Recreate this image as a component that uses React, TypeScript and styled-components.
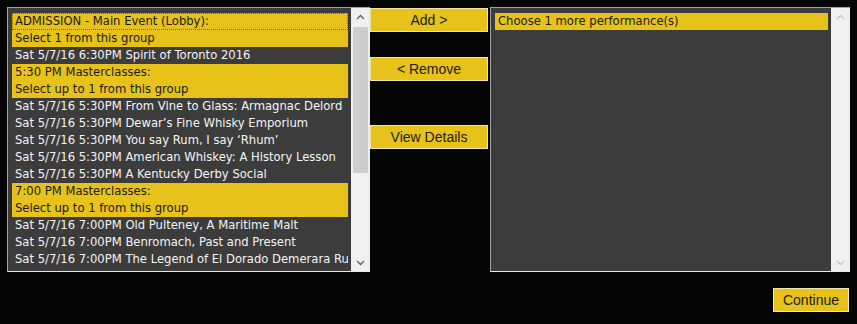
import React from 'react';
import styled, { createGlobalStyle } from 'styled-components';

const GlobalStyle = createGlobalStyle`
  html, body {
    margin: 0;
    padding: 0;
    background: #050505;
  }
`;

const Page = styled.div`
  width: 857px;
  height: 324px;
  padding: 7px 0 0 7px;
  box-sizing: border-box;
  display: flex;
  flex-direction: column;
`;

const Top = styled.div`
  display: flex;
  align-items: flex-start;
`;

const ListBox = styled.div<{ $width: number }>`
  width: ${(p) => p.$width}px;
  height: 265px;
  box-sizing: border-box;
  border: 1px solid #a3a3a3;
  border-right-color: #e8e8e8;
  border-bottom-color: #e8e8e8;
  background: #3c3c3c;
  display: flex;
`;

const Items = styled.div`
  flex: 1;
  min-width: 0;
  padding: 5px 3px 0 4px;
  overflow: hidden;
`;

const Row = styled.div<{ $header?: boolean; $focus?: boolean }>`
  height: 17px;
  line-height: 17px;
  padding-left: 3px;
  box-sizing: border-box;
  white-space: nowrap;
  overflow: hidden;
  font-family: 'DejaVu Sans', Tahoma, sans-serif;
  font-size: 11.6px;
  color: ${(p) => (p.$header ? '#1a1a1a' : '#f4f4f4')};
  background: ${(p) => (p.$header ? '#e6c21a' : 'transparent')};
  outline: ${(p) => (p.$focus ? '1px dotted #6b6b3a' : 'none')};
  outline-offset: -1px;
`;

const ScrollBar = styled.div`
  width: 18px;
  background: #f0f0f0;
  display: flex;
  flex-direction: column;
  align-items: center;
`;

const Arrow = styled.div`
  height: 17px;
  display: flex;
  align-items: center;
  justify-content: center;
`;

const Track = styled.div`
  flex: 1;
  width: 100%;
  display: flex;
  justify-content: center;
`;

const Thumb = styled.div`
  width: 15px;
  height: 146px;
  margin-top: 2px;
  background: #cdcdcd;
`;

const ButtonCol = styled.div`
  width: 118px;
  margin: 1px 2px 0 0;
  display: flex;
  flex-direction: column;
`;

const Button = styled.button<{ $gap?: number }>`
  height: 24px;
  margin-top: ${(p) => p.$gap ?? 0}px;
  padding: 0;
  box-sizing: border-box;
  border: 1px solid #f3e6a6;
  background: #e6c21a;
  color: #1c1c1c;
  font-family: 'Liberation Sans', Arial, sans-serif;
  font-size: 14px;
  cursor: pointer;
`;

const Footer = styled.div`
  display: flex;
  justify-content: flex-end;
  padding-right: 8px;
  margin-top: 16px;
`;

const ContinueButton = styled(Button)`
  width: 76px;
`;

const Chevron = ({ up, color }: { up?: boolean; color: string }) => (
  <svg width="9" height="6" viewBox="0 0 9 6">
    <path
      d={up ? 'M1 5 L4.5 1.5 L8 5' : 'M1 1 L4.5 4.5 L8 1'}
      fill="none"
      stroke={color}
      strokeWidth="1.3"
    />
  </svg>
);

const rows: { text: string; header?: boolean }[] = [
  { text: 'ADMISSION - Main Event (Lobby):', header: true },
  { text: 'Select 1 from this group', header: true },
  { text: 'Sat 5/7/16 6:30PM Spirit of Toronto 2016' },
  { text: '5:30 PM Masterclasses:', header: true },
  { text: 'Select up to 1 from this group', header: true },
  { text: 'Sat 5/7/16 5:30PM From Vine to Glass: Armagnac Delord' },
  { text: 'Sat 5/7/16 5:30PM Dewar\u2019s Fine Whisky Emporium' },
  { text: 'Sat 5/7/16 5:30PM You say Rum, I say \u2018Rhum\u2019' },
  { text: 'Sat 5/7/16 5:30PM American Whiskey: A History Lesson' },
  { text: 'Sat 5/7/16 5:30PM A Kentucky Derby Social' },
  { text: '7:00 PM Masterclasses:', header: true },
  { text: 'Select up to 1 from this group', header: true },
  { text: 'Sat 5/7/16 7:00PM Old Pulteney, A Maritime Malt' },
  { text: 'Sat 5/7/16 7:00PM Benromach, Past and Present' },
  { text: 'Sat 5/7/16 7:00PM The Legend of El Dorado Demerara Rum' },
];

const App: React.FC = () => {
  return (
    <Page>
      <GlobalStyle />
      <Top>
        <ListBox $width={363}>
          <Items>
            {rows.map((r, i) => (
              <Row key={i} $header={r.header} $focus={i === 0}>
                {r.text}
              </Row>
            ))}
          </Items>
          <ScrollBar>
            <Arrow>
              <Chevron up color="#606060" />
            </Arrow>
            <Track>
              <Thumb />
            </Track>
            <Arrow>
              <Chevron color="#606060" />
            </Arrow>
          </ScrollBar>
        </ListBox>
        <ButtonCol>
          <Button>Add &gt;</Button>
          <Button $gap={25}>&lt; Remove</Button>
          <Button $gap={44}>View Details</Button>
        </ButtonCol>
        <ListBox $width={360}>
          <Items>
            <Row $header>Choose 1 more performance(s)</Row>
          </Items>
          <ScrollBar>
            <Arrow>
              <Chevron up color="#c4c4c4" />
            </Arrow>
            <Track />
            <Arrow>
              <Chevron color="#c4c4c4" />
            </Arrow>
          </ScrollBar>
        </ListBox>
      </Top>
      <Footer>
        <ContinueButton>Continue</ContinueButton>
      </Footer>
    </Page>
  );
};

export default App;
